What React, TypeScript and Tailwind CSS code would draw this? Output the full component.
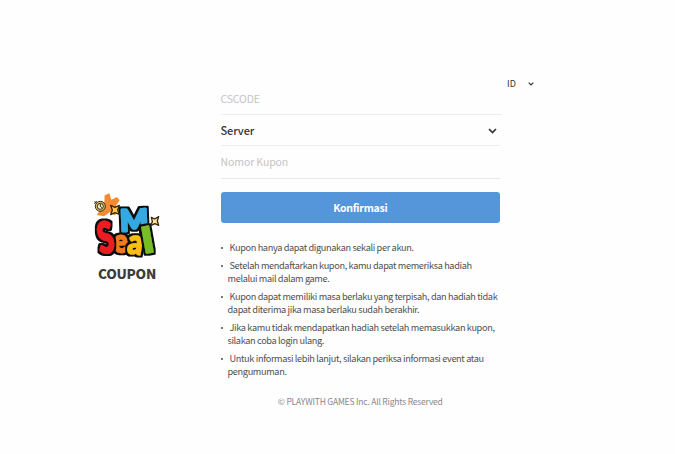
import React from "react";

const notices: { lines: string[] }[] = [
  { lines: ["Kupon hanya dapat digunakan sekali per akun."] },
  { lines: ["Setelah mendaftarkan kupon, kamu dapat memeriksa hadiah", "melalui mail dalam game."] },
  { lines: ["Kupon dapat memiliki masa berlaku yang terpisah, dan hadiah tidak", "dapat diterima jika masa berlaku sudah berakhir."] },
  { lines: ["Jika kamu tidak mendapatkan hadiah setelah memasukkan kupon,", "silakan coba login ulang."] },
  { lines: ["Untuk informasi lebih lanjut, silakan periksa informasi event atau", "pengumuman."] },
];

function Chevron({ className }: { className: string }) {
  return (
    <svg viewBox="0 0 9 6" className={className} fill="none" stroke="currentColor" strokeWidth="1.7">
      <path d="M1 1 L4.5 4.5 L8 1" />
    </svg>
  );
}

// A thick coloured letter; the `outline` filter adds its black border.
function Letter(props: { x: number; y: number; size: number; fill: string; turn: number; sx: number; bold: number; children: string }) {
  return (
    <g filter="url(#outline)">
      <text
        transform={`translate(${props.x} ${props.y}) rotate(${props.turn}) scale(${props.sx} 1)`}
        fontSize={props.size}
        textAnchor="middle"
        strokeLinejoin="round"
        fill={props.fill}
        stroke={props.fill}
        strokeWidth={props.bold}
      >
        {props.children}
      </text>
    </g>
  );
}

function Logo() {
  return (
    <svg viewBox="24 24 210 204" className="h-[68px] w-[70px] overflow-visible font-['Lato',sans-serif] font-black">
      <defs>
        <filter id="outline" x="-20%" y="-20%" width="140%" height="140%">
          <feMorphology in="SourceAlpha" operator="dilate" radius="4.5" result="grown" />
          <feFlood floodColor="#0b0b0b" />
          <feComposite in2="grown" operator="in" result="border" />
          <feMerge>
            <feMergeNode in="border" />
            <feMergeNode in="SourceGraphic" />
          </feMerge>
        </filter>
      </defs>
      <path d="M62 31 L76 25 L82 44 L99 36 L107 46 L96 62 L108 77 L92 91 L77 82 L60 94 L38 90 L48 76 L43 60 L61 52 Z" fill="#f58a35" />
      <Letter x={151} y={137} size={88} fill="#36a9e0" turn={-2} sx={1} bold={8}>M</Letter>
      <Letter x={112} y={202} size={96} fill="#f4791f" turn={-4} sx={0.85} bold={5}>e</Letter>
      <Letter x={150} y={206} size={102} fill="#f8bd16" turn={8} sx={0.85} bold={5}>a</Letter>
      <Letter x={197} y={202} size={104} fill="#79bd28" turn={-10} sx={1.2} bold={6}>l</Letter>
      <Letter x={72} y={203} size={128} fill="#ed1f24" turn={-10} sx={0.68} bold={6}>S</Letter>
      <g stroke="#33290f" strokeWidth="3">
        <circle cx="49" cy="64" r="15" fill="#d8bd62" />
        <circle cx="49" cy="64" r="9" fill="#f8f0c7" />
        <path d="M49 57 V64 L54 68 M31 50 L38 54 M31 57 L38 48" fill="none" />
      </g>
      <g stroke="#3a260c" strokeWidth="4" strokeLinejoin="round">
        <path d="M80 61 L93 67 L106 61 L101 75 L106 88 L93 83 L80 89 L85 75 Z" fill="#ffc64a" />
        <path d="M202 97 L212 102 L224 95 L220 108 L224 121 L213 116 L200 122 L205 110 Z" fill="#ffe39a" />
      </g>
    </svg>
  );
}

export default function App() {
  return (
    <div className="h-[454px] w-[675px] overflow-hidden bg-[#fefefe] font-['Noto_Sans_CJK_KR',sans-serif] text-[#333]">
      <div className="flex h-full items-start pl-[92px]">
        <aside className="flex w-[70px] flex-col items-center pt-[193px]">
          <Logo />
          <h1 className="mt-[3px] text-[13.5px] leading-[18px] font-black tracking-[-0.25px] text-[#3c3c3c]">COUPON</h1>
        </aside>
        <main className="ml-[58.5px] w-[279.5px] pt-[84px]">
          <form>
            <div className="flex h-[31px] w-[281px] items-center border-b border-[#eeeeee] text-[10.5px] tracking-[-0.15px] text-[#c4c4c4]">CSCODE</div>
            <div className="flex h-[31px] items-center justify-between border-b border-[#eeeeee] pr-[3px] text-[11px] font-medium tracking-[-0.1px] text-[#333]">
              <span>Server</span>
              <Chevron className="mt-px h-[6px] w-[9px]" />
            </div>
            <div className="flex h-[33px] items-center border-b border-[#e8e8e8] text-[10.5px] tracking-[-0.1px] text-[#c4c4c4]">Nomor Kupon</div>
            <button type="button" className="mt-[13px] flex h-[31px] w-full items-center justify-center rounded-[3px] bg-[#5596da] pt-px text-[10.5px] font-bold tracking-[-0.25px] text-white">Konfirmasi</button>
          </form>
          <ul className="mt-[18px] space-y-[5.5px] text-[9.2px] leading-[12.75px] tracking-[-0.36px] whitespace-nowrap text-[#505050]">
            {notices.map((n) => (
              <li key={n.lines[0]} className="flex">
                <span className="mt-[5.5px] size-[2px] shrink-0 bg-[#777]" />
                <div className="pl-[5px]">
                  {n.lines.map((line, i) => (
                    <p key={line} className={i === 0 ? "pl-[2px]" : ""}>{line}</p>
                  ))}
                </div>
              </li>
            ))}
          </ul>
          <footer className="mt-[16px] text-center text-[8.5px] leading-[14px] tracking-[-0.2px] text-[#888]">© PLAYWITH GAMES Inc. All Rights Reserved</footer>
        </main>
        <div className="mt-[78px] ml-[7px] flex h-[12px] w-[27px] items-center justify-between text-[9px] text-[#333]">
          <span>ID</span>
          <Chevron className="h-[4px] w-[6px]" />
        </div>
      </div>
    </div>
  );
}
